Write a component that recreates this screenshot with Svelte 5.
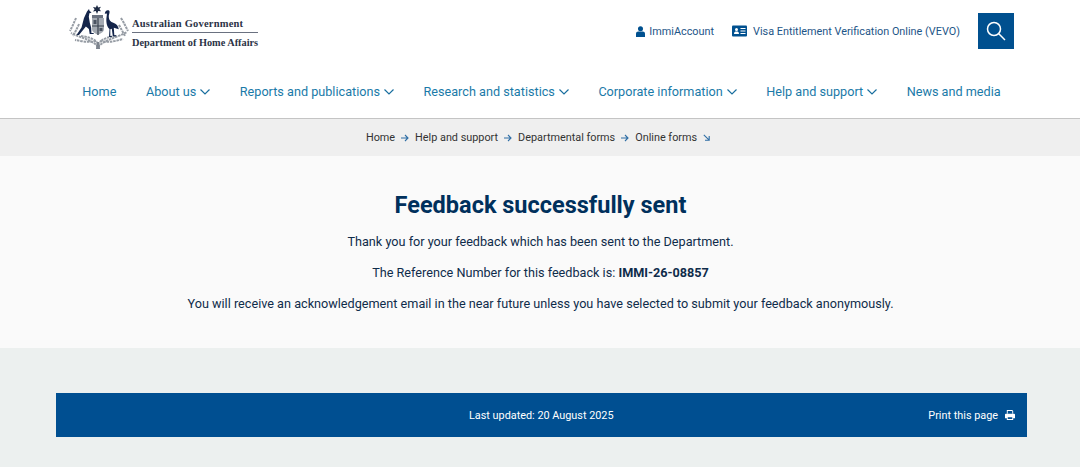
<script>
	const nav = [
		{ label: 'Home' },
		{ label: 'About us', more: true },
		{ label: 'Reports and publications', more: true },
		{ label: 'Research and statistics', more: true },
		{ label: 'Corporate information', more: true },
		{ label: 'Help and support', more: true },
		{ label: 'News and media' }
	];
	const crumbs = ['Home', 'Help and support', 'Departmental forms'];
</script>

<header>
	<div class="top">
		<a class="logo" href="#home">
			<svg class="crest" width="60" height="44" viewBox="0 0 60 44">
				<g fill="none" stroke="#969ca4" stroke-width="2" stroke-dasharray="2.500 .8">
					<path d="M29 42C24 35 12 33 2 28" />
					<path d="M29 42C35 35 47 33 58 27" />
					<path d="M27 36C20 38 12 36 6 35" />
					<path d="M31 36C39 38 47 36 54 34" />
					<path d="M7 13C5 18 3 22 1 26" />
					<path d="M52 13C55 18 57 22 59 26" />
					<path d="M10 19C8 24 6 27 4 31" />
					<path d="M50 20C52 24 54 27 56 31" />
					<path d="M12 31C18 32 24 33 28 37" />
					<path d="M47 31C40 32 35 33 31 37" />
				</g>
				<path d="M27 44h4l-.6-7h-2.800z" fill="#7d848e" />
				<path d="M28 0l1.200 2.400 2.800-.6-1.600 2.300 1.600 2.200-2.800-.4L28 9l-1.200-2.900-2.800.4 1.600-2.200L24 2l2.800.6z" fill="#1d2a44" />
				<path d="M23 10h11v3H23z" fill="#6a7280" />
				<path d="M23 13h12v11c0 3-3 4-6 6-3-2-6-3-6-6z" fill="#a4aab2" />
				<path d="M29 13v17M23 21h12" stroke="#39424f" stroke-width="1.200" />
				<path d="M24.500 15h3v4h-3zM30.500 23h3v3h-3z" fill="#4a5361" />
				<path d="M20 4l.6 2 2 1.600-2.200.6-.6 3.500 1 6 1.400 5 .2 5.300h2.300v1h-4l-.8-5-3-2.500L10 30H7.500l5-7.500L15 13l3-6.500z" fill="#14254a" />
				<path d="M38 5.500c1.500-.6 2.600.2 2.600 1.300 0 1.500-1 3-.8 5.500.2 3 1.800 4.500 4.500 5.500 3 1 5 3 5.500 6.500l-5-1.500.5 7.500h2v1h-3.500l-1-7.500-1.500.5V31h1.500v1H40l.5-8c-3-2.500-3.500-8-3-11.500.2-2 .5-3 .3-4l-2 .2c.2-1.600 1-3 2.200-3.200z" fill="#14254a" />
			</svg>
			<div class="wordmark">
				<span class="gov">Australian Government</span>
				<span class="dept">Department of Home Affairs</span>
			</div>
		</a>
		<div class="tools">
			<a href="#immi">
				<svg width="9" height="11" viewBox="0 0 10 12" fill="#00508f"><circle cx="5" cy="3" r="2.800" /><path d="M0 12V8.500C0 7 1.200 6 2.500 6h5C8.800 6 10 7 10 8.500V12z" /></svg>
				ImmiAccount
			</a>
			<a href="#vevo">
				<svg width="15" height="12" viewBox="0 0 15 12"><rect width="15" height="11" y=".5" rx="1" fill="#00508f" /><circle cx="4.500" cy="4.500" r="1.500" fill="#fff" /><path d="M2 9c0-2 1-2.500 2.500-2.500S7 7 7 9zM8.500 3h5v1h-5zM8.500 5.500h5v1h-5zM8.500 8h5v1h-5z" fill="#fff" /></svg>
				Visa Entitlement Verification Online (VEVO)
			</a>
			<button aria-label="Search">
				<svg width="20" height="20" viewBox="0 0 20 20" fill="none" stroke="#fff" stroke-width="1.500"><circle cx="8" cy="8" r="6.500" /><path d="M12.800 12.800L19 19" /></svg>
			</button>
		</div>
	</div>
	<nav>
		{#each nav as item}
			<a href="#nav">
				{item.label}
				{#if item.more}
					<svg width="10" height="6" viewBox="0 0 10 6" fill="none" stroke="#1a6f9f" stroke-width="1.200"><path d="M.5.500L5 5 9.500.500" /></svg>
				{/if}
			</a>
		{/each}
	</nav>
</header>

<div class="crumbs">
	{#each crumbs as crumb}
		<a href="#crumb">{crumb}</a>
		<svg width="8" height="8" viewBox="0 0 8 8" fill="none" stroke="#2f6ea5" stroke-width="1.100"><path d="M0 4h7M4 1l3 3-3 3" /></svg>
	{/each}
	<a href="#crumb">Online forms</a>
	<svg width="7" height="7" viewBox="0 0 7 7" fill="none" stroke="#2f6ea5" stroke-width="1.100"><path d="M.8.800l5.400 5.400M6.200 2v4.200H2" /></svg>
</div>

<main>
	<h1>Feedback successfully sent</h1>
	<p>Thank you for your feedback which has been sent to the Department.</p>
	<p>The Reference Number for this feedback is: <strong>IMMI-26-08857</strong></p>
	<p>You will receive an acknowledgement email in the near future unless you have selected to submit your feedback anonymously.</p>
</main>

<footer>
	<div class="bar">
		<span class="updated">Last updated: 20 August 2025</span>
		<a href="#print">
			Print this page
			<svg width="10" height="10" viewBox="0 0 11 11" fill="#fff"><path d="M2 0h6l1 1v3H2zM3 1v3h5V1.500L7.500 1z" fill-rule="evenodd" /><path d="M1 4h9a1 1 0 0 1 1 1v4H9v2H2V9H0V5a1 1 0 0 1 1-1zM3 8v2h5V8z" fill-rule="evenodd" /></svg>
		</a>
	</div>
</footer>

<style>
	:global(body) {
		background: #ecf0ef;
		font-family: Roboto, sans-serif;
	}
	a {
		text-decoration: none;
		color: inherit;
	}
	header {
		background: #fff;
		border-bottom: 1px solid #c4c4c4;
	}
	.top {
		display: flex;
		justify-content: space-between;
		align-items: flex-start;
		height: 72px;
		padding: 5px 66px 0 69px;
		box-sizing: border-box;
	}
	.logo {
		display: flex;
		gap: 3px;
	}
	.wordmark {
		display: flex;
		flex-direction: column;
		margin-top: 11px;
		font-family: 'Liberation Serif', serif;
		font-weight: bold;
		color: #2b3346;
	}
	.gov {
		font-size: 10.500px;
		line-height: 15px;
		padding-bottom: 1px;
		border-bottom: 1px solid #6a7180;
		letter-spacing: 0.2px;
	}
	.dept {
		font-size: 10.300px;
		line-height: 19px;
		white-space: nowrap;
	}
	.tools {
		display: flex;
		align-items: center;
		gap: 18px;
		margin-top: 8px;
		font-size: 10.850px;
		color: #1d5587;
	}
	.tools a {
		display: flex;
		align-items: center;
		gap: 4px;
	}
	.tools a + a {
		gap: 6px;
	}
	button {
		width: 36px;
		height: 36px;
		border: 0;
		padding: 0;
		background: #00508f;
		display: flex;
		align-items: center;
		justify-content: center;
	}
	nav {
		display: flex;
		justify-content: center;
		gap: 29.500px;
		height: 46px;
		padding-top: 10.500px;
		padding-left: 3px;
		box-sizing: border-box;
		font-size: 12.660px;
		line-height: 18px;
		color: #1a7aa8;
	}
	nav a {
		display: flex;
		align-items: center;
		gap: 4px;
		height: 18px;
		white-space: nowrap;
	}
	.crumbs {
		display: flex;
		align-items: center;
		justify-content: center;
		height: 37px;
		padding-right: 4px;
		background: #efefef;
		font-size: 10.850px;
		color: #333;
		gap: 6px;
	}
	main {
		background: #fafafa;
		height: 192px;
		box-sizing: border-box;
		padding: 32px 0 0 1px;
		text-align: center;
		color: #00305c;
		font-size: 12.660px;
		line-height: 20px;
	}
	h1 {
		margin: 0 0 10px;
		font-size: 23.500px;
		line-height: 34px;
		font-weight: 700;
	}
	p {
		margin: 0 0 11px;
		color: #0f2c4a;
	}
	footer {
		padding: 45px 53px 30px 56px;
	}
	.bar {
		display: flex;
		align-items: center;
		justify-content: space-between;
		height: 44px;
		background: #004f91;
		color: #fff;
		font-size: 10.850px;
		padding: 0 12px 0 413px;
	}
	.bar a {
		display: flex;
		align-items: center;
		gap: 7px;
	}
</style>
